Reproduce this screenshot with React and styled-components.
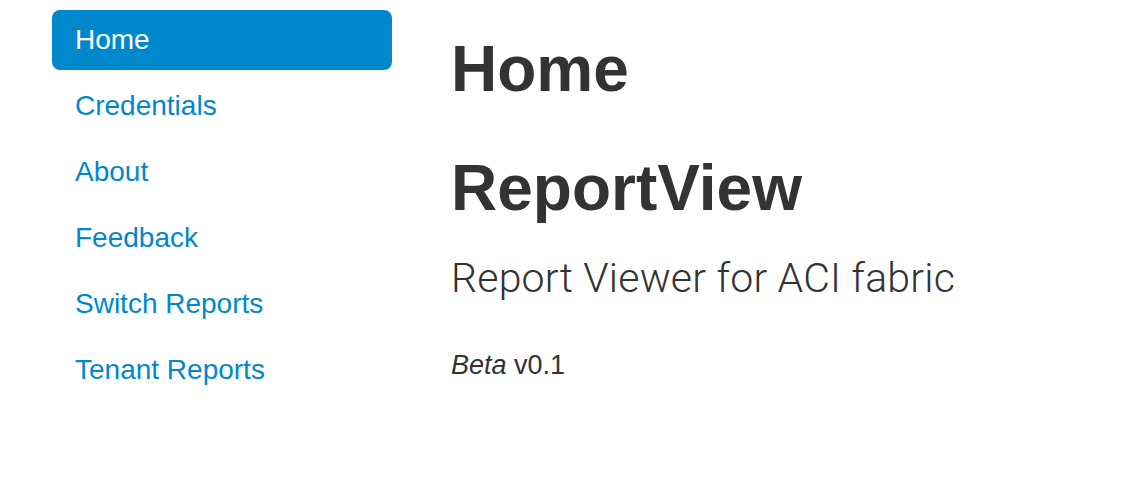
import React from "react";
import styled, { createGlobalStyle } from "styled-components";

const GlobalStyle = createGlobalStyle`
  html, body {
    margin: 0;
    padding: 0;
    background: #ffffff;
  }
  body {
    font-family: "Liberation Sans", Arial, sans-serif;
    color: #333333;
  }
`;

const Page = styled.div`
  display: flex;
  align-items: flex-start;
  padding-left: 52px;
  gap: 59px;
`;

const Nav = styled.ul`
  list-style: none;
  margin: 0;
  padding: 10px 0 0;
  width: 340px;
  display: flex;
  flex-direction: column;
  gap: 6px;
`;

const NavItem = styled.li`
  margin: 0;
`;

const NavLink = styled.a`
  display: block;
  height: 60px;
  line-height: 60px;
  padding-left: 23px;
  border-radius: 8px;
  font-size: 28px;
  text-decoration: none;
  color: ${(p) => (p.$active ? "#ffffff" : "#0088cc")};
  background: ${(p) => (p.$active ? "#0088cc" : "transparent")};
  cursor: pointer;
`;

const Main = styled.main`
  display: flex;
  flex-direction: column;
  padding-top: 29px;
`;

const Heading = styled.h1`
  margin: 0 0 ${(p) => p.$gap || 0}px;
  font-size: 64px;
  line-height: 80px;
  font-weight: 700;
  color: #333333;
`;

const Lead = styled.p`
  margin: 25px 0 0;
  font-family: Roboto, "Liberation Sans", sans-serif;
  font-weight: 300;
  font-size: 41px;
  line-height: 50px;
  letter-spacing: 0.2px;
  color: #333333;
`;

const Version = styled.p`
  margin: 47px 0 0;
  font-size: 27px;
  line-height: 30px;
  color: #333333;
`;

const items = ["Home", "Credentials", "About", "Feedback", "Switch Reports", "Tenant Reports"];

export default function App() {
  return (
    <>
      <GlobalStyle />
      <Page>
        <Nav>
          {items.map((label, i) => (
            <NavItem key={label}>
              <NavLink $active={i === 0}>{label}</NavLink>
            </NavItem>
          ))}
        </Nav>
        <Main>
          <Heading $gap={39}>Home</Heading>
          <Heading>ReportView</Heading>
          <Lead>Report Viewer for ACI fabric</Lead>
          <Version>
            <em>Beta</em> v0.1
          </Version>
        </Main>
      </Page>
    </>
  );
}
